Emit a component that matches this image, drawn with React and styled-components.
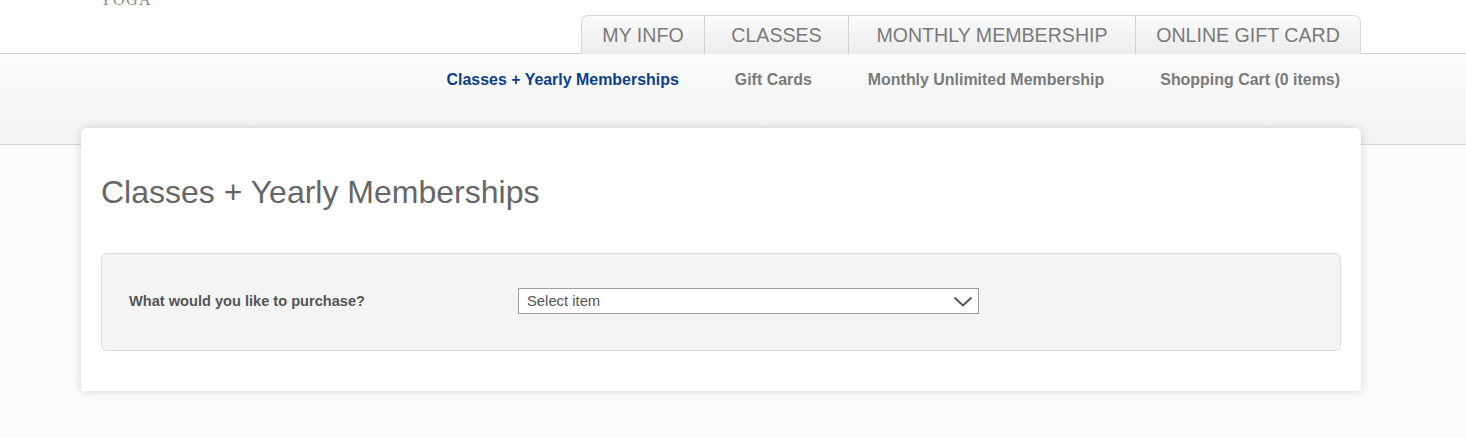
import React from "react";
import styled, { createGlobalStyle } from "styled-components";

const tabs = [
  { label: "MY INFO", width: 124 },
  { label: "CLASSES", width: 144 },
  { label: "MONTHLY MEMBERSHIP", width: 287 },
  { label: "ONLINE GIFT CARD", width: 225 },
];

const subLinks = [
  { label: "Classes + Yearly Memberships", active: true },
  { label: "Gift Cards" },
  { label: "Monthly Unlimited Membership" },
  { label: "Shopping Cart (0 items)" },
];

const App = () => {
  return (
    <Page>
      <GlobalStyle />
      <Header>
        <Logo>
          <LogoText>YOGA</LogoText>
        </Logo>
        <Tabs>
          {tabs.map((tab) => (
            <Tab key={tab.label} $width={tab.width}>
              {tab.label}
            </Tab>
          ))}
        </Tabs>
      </Header>
      <SubNav>
        {subLinks.map((link) => (
          <SubLink key={link.label} $active={link.active}>
            {link.label}
          </SubLink>
        ))}
      </SubNav>
      <Card>
        <Title>Classes + Yearly Memberships</Title>
        <Panel>
          <Label>What would you like to purchase?</Label>
          <SelectBox>
            <span>Select item</span>
            <svg width="20" height="11" viewBox="0 0 20 11" fill="none">
              <path d="M1.5 1.5 L10 9.5 L18.5 1.5" stroke="#555" strokeWidth="2" />
            </svg>
          </SelectBox>
        </Panel>
      </Card>
    </Page>
  );
};

const GlobalStyle = createGlobalStyle`
  html, body {
    margin: 0;
    padding: 0;
    background: #fbfbfb;
  }

  body {
    font-family: "Liberation Sans", Arial, sans-serif;
  }
`;

const Page = styled.div`
  height: 438px;
  overflow: hidden;
  background: #fbfbfb;
`;

const Header = styled.header`
  height: 53px;
  padding: 0 105px 0 81px;
  display: flex;
  justify-content: space-between;
  align-items: flex-start;
  background: #fff;
  border-bottom: 1px solid #d2d2d2;
`;

const Logo = styled.div`
  width: 93px;
  height: 12px;
  box-sizing: border-box;
  padding-right: 3px;
  overflow: hidden;
  display: flex;
  align-items: flex-end;
  justify-content: center;
  background: #fdfdfb;
`;

const LogoText = styled.span`
  font-family: "Liberation Serif", serif;
  font-size: 16px;
  line-height: 16px;
  letter-spacing: 1.5px;
  color: #8a8a8a;
  margin-bottom: 4px;
`;

const Tabs = styled.nav`
  display: flex;
  margin-top: 15px;
  height: 39px;
  box-sizing: border-box;
  background: linear-gradient(#fbfbfb, #ececec);
  border: 1px solid #d9d9d9;
  border-bottom: none;
  border-radius: 7px 7px 0 0;
`;

const Tab = styled.a`
  width: ${({ $width }) => $width}px;
  box-sizing: border-box;
  display: flex;
  align-items: center;
  justify-content: center;
  font-size: 19.6px;
  color: #7a7a7a;
  border-right: 1px solid #d2d2d2;

  &:first-child {
    width: ${({ $width }) => $width - 1}px;
  }

  &:last-child {
    width: ${({ $width }) => $width - 1}px;
    border-right: none;
  }
`;

const SubNav = styled.nav`
  height: 91px;
  box-sizing: border-box;
  padding: 16px 126px 0 0;
  display: flex;
  justify-content: flex-end;
  align-items: flex-start;
  gap: 56px;
  background: linear-gradient(#fbfbfb, #f3f3f3);
  border-bottom: 1px solid #d8d8d8;
`;

const SubLink = styled.a`
  font-size: 15.95px;
  line-height: 20px;
  font-weight: 700;
  color: ${({ $active }) => ($active ? "#0b4089" : "#7a7a7a")};
`;

const Card = styled.main`
  position: relative;
  width: 1280px;
  height: 263px;
  box-sizing: border-box;
  margin: -17px 0 0 81px;
  padding: 47px 20px 0;
  background: #fff;
  border-radius: 6px 6px 0 0;
  box-shadow: 0 0 8px rgba(0, 0, 0, 0.16);
`;

const Title = styled.h1`
  margin: 0 0 43px;
  font-size: 32px;
  line-height: 35px;
  font-weight: 400;
  color: #666;
`;

const Panel = styled.section`
  height: 98px;
  box-sizing: border-box;
  padding: 0 27px 2px;
  display: flex;
  align-items: center;
  background: #f4f4f4;
  border: 1px solid #dcdcdc;
  border-radius: 6px;
`;

const Label = styled.label`
  width: 389px;
  font-size: 14.6px;
  font-weight: 700;
  color: #555;
`;

const SelectBox = styled.div`
  width: 461px;
  height: 26px;
  box-sizing: border-box;
  padding: 0 5px 0 8px;
  display: flex;
  align-items: center;
  justify-content: space-between;
  background: #fff;
  border: 1px solid #9c9c9c;
  font-size: 14.8px;
  color: #555;
`;

export default App;
